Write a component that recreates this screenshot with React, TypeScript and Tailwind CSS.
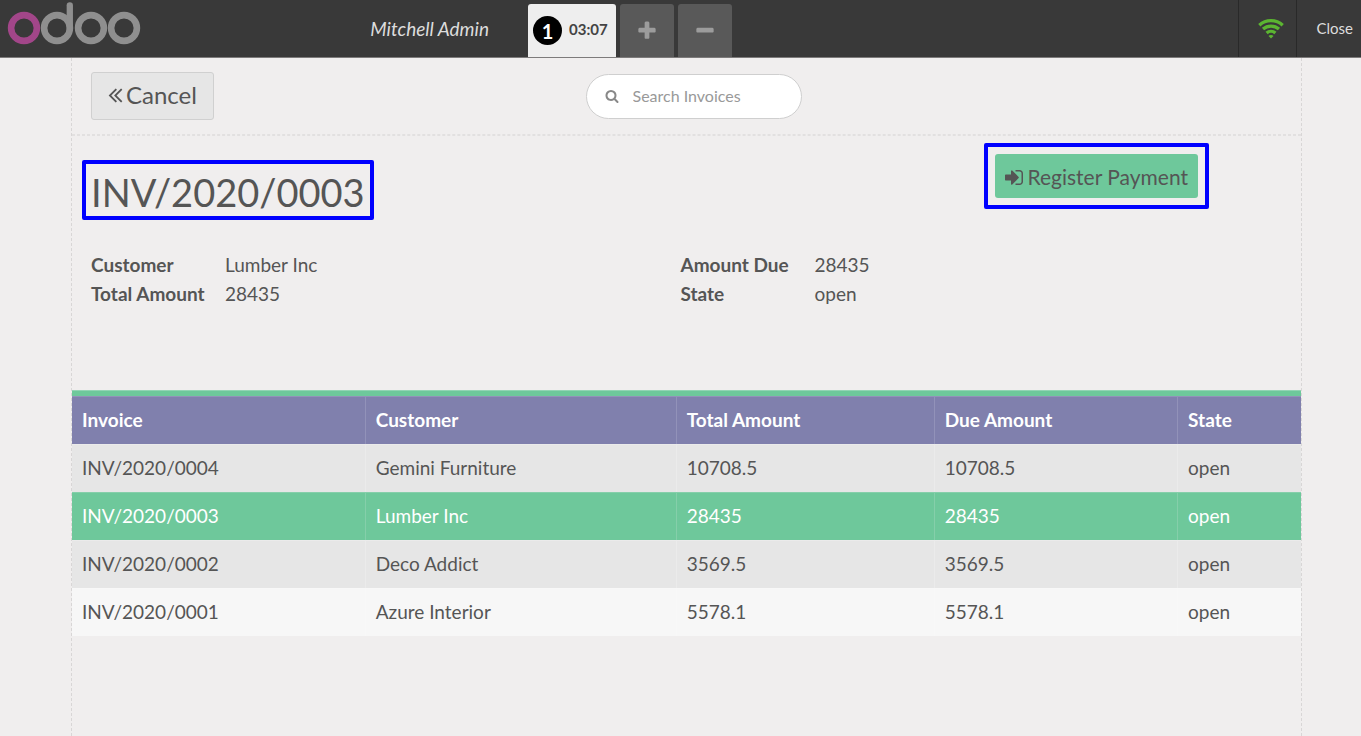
import React from "react";

const invoices = [
  { id: "INV/2020/0004", customer: "Gemini Furniture", total: "10708.5", due: "10708.5", state: "open" },
  { id: "INV/2020/0003", customer: "Lumber Inc", total: "28435", due: "28435", state: "open", selected: true },
  { id: "INV/2020/0002", customer: "Deco Addict", total: "3569.5", due: "3569.5", state: "open" },
  { id: "INV/2020/0001", customer: "Azure Interior", total: "5578.1", due: "5578.1", state: "open" },
];

const icons = {
  signIn:
    "M1312 896q0 26-19 45l-544 544q-19 19-45 19t-45-19-19-45v-288h-448q-26 0-45-19t-19-45v-384q0-26 19-45t45-19h448v-288q0-26 19-45t45-19 45 19l544 544q19 19 19 45zm352-352v704q0 119-84.5 203.5t-203.5 84.5h-320q-13 0-22.5-9.5t-9.5-22.5q0-4-1-20t-.5-26.5 3-23.5 10-19.5 20.5-6.5h320q66 0 113-47t47-113v-704q0-66-47-113t-113-47h-312l-11.5-1-11.5-3-8-5.5-7-9-2-13.5q0-4-1-20t-.5-26.5 3-23.5 10-19.5 20.5-6.5h320q119 0 203.5 84.5t84.5 203.5z",
  search:
    "M1216 832q0-185-131.5-316.5t-316.5-131.5-316.5 131.5-131.5 316.5 131.5 316.5 316.5 131.5 316.5-131.5 131.5-316.5zm512 832q0 52-38 90t-90 38q-54 0-90-38l-343-342q-179 124-399 124-143 0-273.5-55.5t-225-150-150-225-55.5-273.5 55.5-273.5 150-225 225-150 273.5-55.5 273.5 55.5 225 150 150 225 55.5 273.5q0 220-124 399l343 343q37 37 37 90z",
  back:
    "M1011 1376q0 13-10 23l-50 50q-10 10-23 10t-23-10l-466-466q-10-10-10-23t10-23l466-466q10-10 23-10t23 10l50 50q10 10 10 23t-10 23l-393 393 393 393q10 10 10 23zm384 0q0 13-10 23l-50 50q-10 10-23 10t-23-10l-466-466q-10-10-10-23t10-23l466-466q10-10 23-10t23 10l50 50q10 10 10 23t-10 23l-393 393 393 393q10 10 10 23z",
  plus:
    "M1600 736v192q0 40-28 68t-68 28h-416v416q0 40-28 68t-68 28h-192q-40 0-68-28t-28-68v-416h-416q-40 0-68-28t-28-68v-192q0-40 28-68t68-28h416v-416q0-40 28-68t68-28h192q40 0 68 28t28 68v416h416q40 0 68 28t28 68z",
  minus:
    "M1600 736v192q0 40-28 68t-68 28h-1216q-40 0-68-28t-28-68v-192q0-40 28-68t68-28h1216q40 0 68 28t28 68z",
};

function Icon({ d, className, viewBox = "0 0 1792 1792" }: { d: string; className: string; viewBox?: string }) {
  return (
    <svg viewBox={viewBox} className={className} fill="currentColor" aria-hidden="true">
      <path d={d} />
    </svg>
  );
}

function Logo() {
  return (
    <svg viewBox="0 0 134 44" className="ml-[7px] h-[44px] w-[134px]" fill="none" strokeWidth="6.6" role="img" aria-label="odoo">
      <circle cx="17" cy="26" r="12.9" stroke="#a24689" />
      <g stroke="#8f8f8f">
        <circle cx="50" cy="26" r="12.9" />
        <circle cx="84" cy="26" r="12.9" />
        <circle cx="117" cy="26" r="12.9" />
        <path d="M62.8 3.3V26" strokeLinecap="round" strokeWidth="6.3" />
      </g>
    </svg>
  );
}

function Wifi() {
  return (
    <svg viewBox="0 0 26 20" className="h-[20px] w-[26px]" fill="none" stroke="#5bb531" strokeWidth="3.3" aria-hidden="true">
      <path d="M1.3 6.2a17.4 17.4 0 0 1 23.4 0" />
      <path d="M5 10.1a12 12 0 0 1 16 0" />
      <path d="M8.6 14.1a6.6 6.6 0 0 1 8.8 0" />
      <path d="M13 19.6l-2.5-2.6a3.4 3.4 0 0 1 5 0z" fill="#5bb531" stroke="none" />
    </svg>
  );
}

function TopBar() {
  return (
    <header className="flex h-[58px] border-b border-[#7d7b7b] bg-[#393939]">
      <div className="flex w-[528px] shrink-0 justify-between pr-[39px]">
        <div className="pt-[2px]">
          <Logo />
        </div>
        <span className="self-center text-[19px] leading-6 text-[#ddd] italic">Mitchell Admin</span>
      </div>
      <nav className="flex flex-1 items-end gap-1" aria-label="Orders">
        <button className="flex h-[53px] w-[88px] items-center gap-[7px] rounded-t-[3px] bg-[#eeeeee] pl-[5px] text-[#444]">
          <span className="flex size-[29px] items-center justify-center rounded-full bg-black text-[20px] leading-6 font-bold text-white">1</span>
          <span className="pb-1 text-[15px] leading-5 font-bold">03:07</span>
        </button>
        <button className="flex h-[53px] w-[54px] items-center justify-center rounded-t-[3px] bg-[#595959] text-[#9c9c9c]" aria-label="New order">
          <Icon d={icons.plus} className="size-[22px]" />
        </button>
        <button className="flex h-[53px] w-[54px] items-center justify-center rounded-t-[3px] bg-[#595959] text-[#9c9c9c]" aria-label="Delete order">
          <Icon d={icons.minus} className="size-[22px]" />
        </button>
      </nav>
      <div className="flex w-[58px] items-center justify-center border-l border-[#292929] pl-2">
        <Wifi />
      </div>
      <button className="border-l border-[#292929] pr-2 pb-0.5 pl-[20px] text-[15px] leading-5 text-[#ddd]">Close</button>
    </header>
  );
}

function Field({ label, value }: { label: string; value: string }) {
  return (
    <div className="flex h-[29px] items-center">
      <dt className="w-[134px] font-bold">{label}</dt>
      <dd>{value}</dd>
    </div>
  );
}

export default function App() {
  return (
    <div className="flex min-h-screen flex-col bg-[#f0eeee] font-['Lato',sans-serif] text-[#555]">
      <TopBar />
      <main className="mr-[59px] ml-[71px] flex-1 border-x border-dashed border-[#d8d6d6]">
        <section className="flex h-[77px] items-center border-b border-dashed border-[#e2e0e0] pr-[5px] pl-[19px]">
          <div className="flex-1">
            <button className="flex h-[48px] items-center rounded-[3px] border border-[#d0d0d0] bg-[#e6e6e6] px-4 pb-0.5 text-[24px] leading-8">
              <Icon d={icons.back} viewBox="400 64 1024 1792" className="mr-[3px] h-[25px] w-[15px]" />
              Cancel
            </button>
          </div>
          <label className="flex h-[45px] w-[216px] items-center gap-[14px] rounded-full border border-[#cfcfcf] bg-white pl-[18px]">
            <Icon d={icons.search} className="size-[14px] text-[#888]" />
            <input
              type="search"
              aria-label="Search Invoices"
              placeholder="Search Invoices"
              className="w-[150px] bg-transparent text-[16px] leading-6 outline-none placeholder:text-[#999]"
            />
          </label>
          <div className="flex-1" />
        </section>

        <section className="flex h-[255px] flex-col border-t border-dashed border-[#e2e0e0]">
          <div className="flex items-start justify-between pt-[7px] pr-[92px] pl-[10px]">
            <h1 className="mt-[17px] flex h-[60px] items-center rounded-[2px] border-4 border-[#0000ff] px-[5px] pt-1 text-[38px] leading-[48px]">
              INV/2020/0003
            </h1>
            <div className="rounded-[2px] border-4 border-[#0000ff] px-[7px] py-[7px]">
              <button className="flex h-[44px] items-center rounded-[3px] bg-[#6ec89b] px-[10px] pt-0.5 text-[21px] leading-7">
                <Icon d={icons.signIn} viewBox="128 0 1536 1792" className="mr-1 h-[21px] w-[18px]" />
                Register Payment
              </button>
            </div>
          </div>
          <dl className="mt-[30px] grid grid-cols-2 pr-[31px] pl-[19px] text-[19px] leading-6">
            <Field label="Customer" value="Lumber Inc" />
            <Field label="Amount Due" value="28435" />
            <Field label="Total Amount" value="28435" />
            <Field label="State" value="open" />
          </dl>
        </section>

        <div className="border-t border-[#93d4b4]">
          <div className="border-t-[5px] border-[#6ec89b]">
            <table className="w-full table-fixed border-separate border-spacing-0 text-left text-[19px] leading-6">
              <colgroup>
                <col className="w-[23.9%]" />
                <col className="w-[25.3%]" />
                <col className="w-[21%]" />
                <col className="w-[19.8%]" />
                <col className="w-[10%]" />
              </colgroup>
              <thead className="bg-[#8080ad] text-white">
                <tr className="*:h-[48px] *:border-t *:border-r *:border-[#9292b9] *:px-[10px] *:pb-0.5 *:last:border-r-0">
                  <th>Invoice</th>
                  <th>Customer</th>
                  <th>Total Amount</th>
                  <th>Due Amount</th>
                  <th>State</th>
                </tr>
              </thead>
              <tbody>
                {invoices.map((inv) => (
                  <tr
                    key={inv.id}
                    className={
                      inv.selected
                        ? "bg-[#6ec89b] text-white *:h-[48px] *:border-t *:border-r *:border-[#85cfaa] *:px-[10px] *:pb-0.5 *:last:border-r-0"
                        : "odd:bg-[#e6e6e6] even:bg-[#f7f7f7] *:h-[48px] *:border-t *:border-r *:border-white/20 *:px-[10px] *:pb-0.5 *:last:border-r-0"
                    }
                  >
                    <td>{inv.id}</td>
                    <td>{inv.customer}</td>
                    <td>{inv.total}</td>
                    <td>{inv.due}</td>
                    <td>{inv.state}</td>
                  </tr>
                ))}
              </tbody>
            </table>
          </div>
        </div>
      </main>
    </div>
  );
}
